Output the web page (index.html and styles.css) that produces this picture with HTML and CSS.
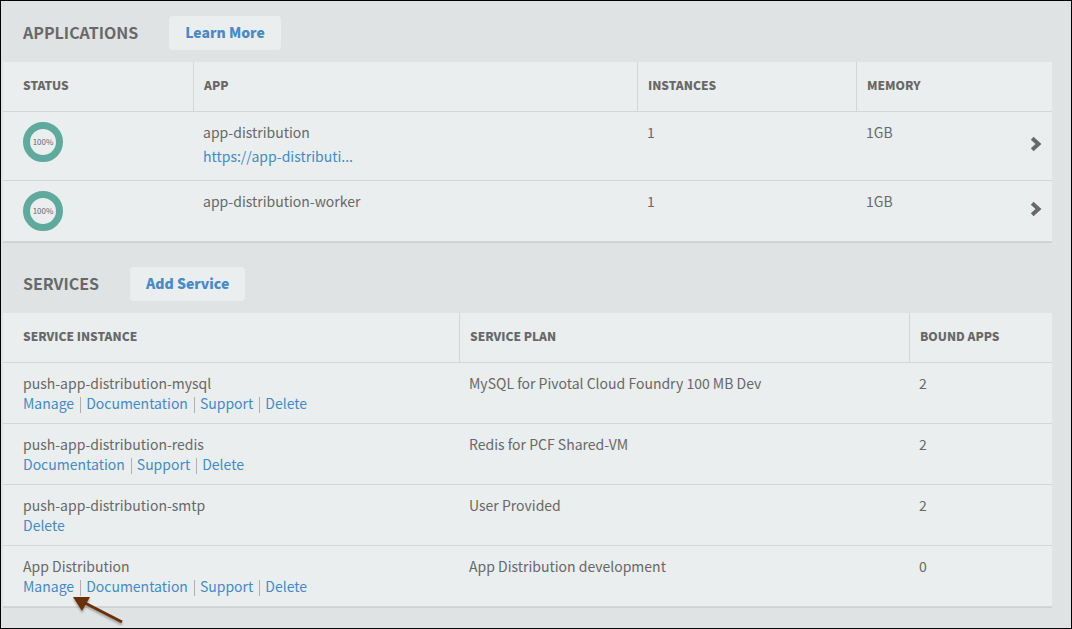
FILE: index.html
```html
<!DOCTYPE html>
<html lang="en">
<head>
<meta charset="utf-8">
<meta name="viewport" content="width=device-width, initial-scale=1">
<title>Applications and Services</title>
<link rel="stylesheet" href="styles.css">
</head>
<body>
<main class="page">
  <section class="section">
    <header class="section-head">
      <h2 class="section-title">APPLICATIONS</h2>
      <button class="button" type="button">Learn More</button>
    </header>
    <table class="table">
      <colgroup><col class="col-status"><col class="col-app"><col class="col-instances"><col class="col-memory"><col class="col-open"></colgroup>
      <thead>
        <tr><th scope="col">STATUS</th><th scope="col">APP</th><th scope="col">INSTANCES</th><th scope="col" colspan="2">MEMORY</th></tr>
      </thead>
      <tbody>
        <tr>
          <td><div class="ring">100%</div></td>
          <td class="app"><div>app-distribution</div><a class="link" href="#app">https://app-distributi...</a></td>
          <td>1</td>
          <td>1GB</td>
          <td class="open"><a class="chevron" href="#app-distribution" aria-label="Open app-distribution"><svg width="12" height="16" viewBox="0 0 12 16"><path d="M2.200 2.200 8.500 8l-6.300 5.800"/></svg></a></td>
        </tr>
        <tr>
          <td><div class="ring">100%</div></td>
          <td class="app">app-distribution-worker</td>
          <td>1</td>
          <td>1GB</td>
          <td class="open"><a class="chevron" href="#app-distribution-worker" aria-label="Open app-distribution-worker"><svg width="12" height="16" viewBox="0 0 12 16"><path d="M2.200 2.200 8.500 8l-6.300 5.800"/></svg></a></td>
        </tr>
      </tbody>
    </table>
  </section>

  <section class="section">
    <header class="section-head">
      <h2 class="section-title">SERVICES</h2>
      <button class="button" type="button">Add Service</button>
    </header>
    <table class="table">
      <colgroup><col class="col-service"><col class="col-plan"><col class="col-bound"></colgroup>
      <thead>
        <tr><th scope="col">SERVICE INSTANCE</th><th scope="col">SERVICE PLAN</th><th scope="col">BOUND APPS</th></tr>
      </thead>
      <tbody>
        <tr>
          <td><div>push-app-distribution-mysql</div>
            <div class="actions"><a class="link" href="#manage">Manage</a><a class="link" href="#docs">Documentation</a><a class="link" href="#support">Support</a><a class="link" href="#delete">Delete</a></div></td>
          <td>MySQL for Pivotal Cloud Foundry 100 MB Dev</td>
          <td>2</td>
        </tr>
        <tr>
          <td><div>push-app-distribution-redis</div>
            <div class="actions"><a class="link" href="#docs">Documentation</a><a class="link" href="#support">Support</a><a class="link" href="#delete">Delete</a></div></td>
          <td>Redis for PCF Shared-VM</td>
          <td>2</td>
        </tr>
        <tr>
          <td><div>push-app-distribution-smtp</div>
            <div class="actions"><a class="link" href="#delete">Delete</a></div></td>
          <td>User Provided</td>
          <td>2</td>
        </tr>
        <tr>
          <td><div>App Distribution</div>
            <div class="actions"><a class="link" href="#manage">Manage</a><a class="link" href="#docs">Documentation</a><a class="link" href="#support">Support</a><a class="link" href="#delete">Delete</a>
              <svg class="pointer" width="56" height="34" viewBox="0 0 56 34" aria-hidden="true"><path class="pointer-line" d="M12 7 49 26"/><path class="pointer-head" d="M0 1h17L9 15z"/></svg></div></td>
          <td>App Distribution development</td>
          <td>0</td>
        </tr>
      </tbody>
    </table>
  </section>
</main>
</body>
</html>
```
FILE: styles.css
```css
* { box-sizing: border-box; }

body {
  margin: 0;
  background: #dfe3e4;
  color: #686868;
  font: 14px/20px "Noto Sans CJK SC", "Open Sans", sans-serif;
}

.page {
  min-height: 100vh;
  padding: 0 19px 20px 2px;
  border: 1px solid #000;
}

.section-head {
  display: flex;
  align-items: center;
  gap: 31px;
  padding: 24px 20px 12px;
}

.section:first-child .section-head { padding-top: 15px; }

.section-title {
  margin: 0;
  padding-bottom: 2px;
  font-size: 16px;
  font-weight: 700;
  line-height: 20px;
}

.button {
  height: 34px;
  padding: 0 16px 2px;
  border: 0;
  border-radius: 4px;
  background: #eaeeef;
  color: #488ac8;
  font: inherit;
  font-weight: 900;
}

.table {
  width: 100%;
  table-layout: fixed;
  border-spacing: 0;
  background: #eaeeef;
  border-bottom: 1px solid #cdd1d2;
}

.col-status { width: 190px; }
.col-instances { width: 219px; }
.col-memory { width: 146px; }
.col-open { width: 50px; }
.col-service { width: 456px; }
.col-bound { width: 143px; }

th {
  height: 50px;
  padding: 0 10px 4px;
  border-bottom: 1px solid #d3d7d8;
  border-left: 1px solid #d3d7d8;
  font-size: 12px;
  font-weight: 900;
  text-align: left;
}

td {
  height: 61px;
  padding: 10px;
  border-bottom: 1px solid #d3d7d8;
  vertical-align: top;
}

th:first-child,
td:first-child { padding-left: 20px; }
th:first-child { border-left: 0; }

.app .link {
  display: block;
  padding: 4px 0;
}

.link {
  color: #428bca;
  text-decoration: none;
}

.ring {
  display: flex;
  align-items: center;
  justify-content: center;
  width: 40px;
  height: 40px;
  border: 7px solid #5fa99d;
  border-radius: 50%;
  font-size: 8px;
  line-height: 10px;
}

.open {
  padding: 0 10px 4px;
  vertical-align: middle;
}

.chevron {
  display: flex;
  justify-content: flex-end;
}

.chevron path {
  fill: none;
  stroke: #686868;
  stroke-width: 4;
}

.actions {
  position: relative;
  display: flex;
}

.actions .link + .link::before {
  content: "";
  display: inline-block;
  width: 1px;
  height: 16px;
  margin: 0 5px 0 6px;
  background: #acb0b1;
  vertical-align: -4px;
}

.pointer {
  position: absolute;
  top: 20px;
  left: 50px;
  overflow: visible;
  filter: drop-shadow(0 2px 1px rgba(0, 0, 0, 0.3));
}

.pointer-line {
  fill: none;
  stroke: #6b3009;
  stroke-width: 3;
}

.pointer-head { fill: #6b3009; }
```
